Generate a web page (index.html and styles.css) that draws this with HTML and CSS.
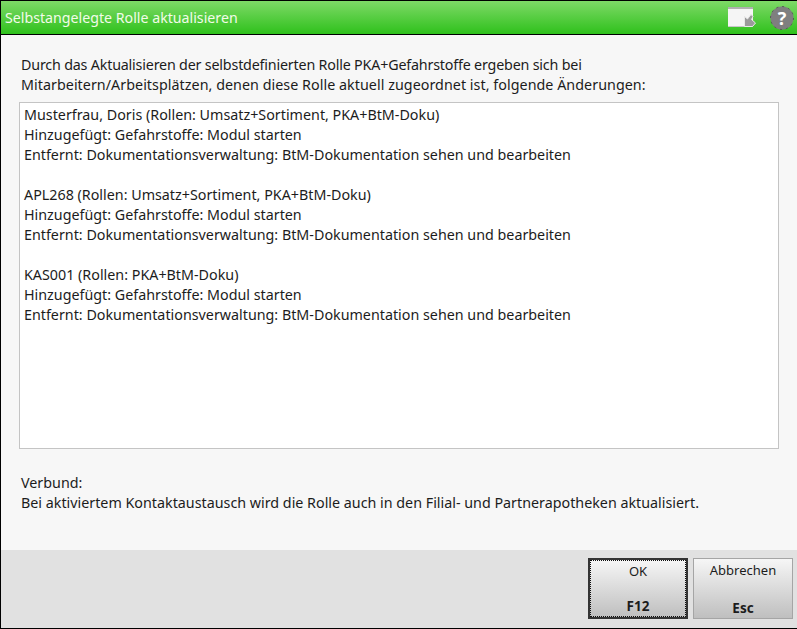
FILE: index.html
```html
<!DOCTYPE html>
<html lang="de">
<head>
<meta charset="utf-8">
<title>Selbstangelegte Rolle aktualisieren</title>
<link rel="stylesheet" href="styles.css">
</head>
<body>
<div class="window">
  <header class="titlebar">
    <span class="title">Selbstangelegte Rolle aktualisieren</span>
    <svg class="icon-note" width="28" height="21" viewBox="0 0 28 21">
      <rect x="0" y="0" width="25" height="20" fill="#f5f5f5"/>
      <rect x="0" y="0" width="25" height="2" fill="#b0b0b0"/>
      <rect x="0" y="19" width="25" height="1" fill="#c8c8c8"/>
      <path d="M16.500 9.500v10h8l3-3.500-4-3.500 1.500-3-2-2-3.500 4.500z" fill="#9b9b9b" stroke="#e8e8e8"/>
    </svg>
    <svg class="icon-help" width="24" height="24" viewBox="0 0 24 24">
      <circle cx="12" cy="12" r="11.500" fill="#7f7f7f"/>
      <circle cx="12" cy="12" r="11.500" fill="none" stroke="#555" stroke-dasharray="2 4"/>
      <text x="12" y="18.500" text-anchor="middle" class="help-mark">?</text>
    </svg>
  </header>
  <main class="content">
    <p class="intro"><span class="intro-first">Durch das Aktualisieren der selbstdefinierten Rolle PKA+Gefahrstoffe ergeben sich bei</span><br><span class="intro-second">Mitarbeitern/Arbeitsplätzen, denen diese Rolle aktuell zugeordnet ist, folgende Änderungen:</span></p>
    <div class="changes">
      <p>Musterfrau, Doris (Rollen: Umsatz+Sortiment, PKA+BtM-Doku)<br>Hinzugefügt: Gefahrstoffe: Modul starten<br>Entfernt: Dokumentationsverwaltung: BtM-Dokumentation sehen und bearbeiten</p>
      <p>APL268 (Rollen: Umsatz+Sortiment, PKA+BtM-Doku)<br>Hinzugefügt: Gefahrstoffe: Modul starten<br>Entfernt: Dokumentationsverwaltung: BtM-Dokumentation sehen und bearbeiten</p>
      <p>KAS001 (Rollen: PKA+BtM-Doku)<br>Hinzugefügt: Gefahrstoffe: Modul starten<br>Entfernt: Dokumentationsverwaltung: BtM-Dokumentation sehen und bearbeiten</p>
    </div>
    <p class="note">Verbund:<br>Bei aktiviertem Kontaktaustausch wird die Rolle auch in den Filial- und Partnerapotheken aktualisiert.</p>
  </main>
  <footer class="actions">
    <button class="btn btn-default"><span class="btn-inner"><span>OK</span><b>F12</b></span></button>
    <button class="btn"><span class="btn-inner"><span>Abbrechen</span><b>Esc</b></span></button>
  </footer>
</div>
</body>
</html>
```
FILE: styles.css
```css
* { box-sizing: border-box; }
html, body { margin: 0; height: 100%; }
body { background: #000; font-family: "Noto Sans", "Open Sans", "Liberation Sans", sans-serif; font-size: 14.3px; line-height: 20px; color: #1c1c1c; }
.window { width: 797px; height: 629px; padding: 1px 0 1px 1px; display: flex; flex-direction: column; background: #000; }
.titlebar { height: 33px; flex: none; display: flex; align-items: center; padding: 0 3px 0 4px; background: linear-gradient(#7ed967, #2fc11c); margin-bottom: 1px; }
.title { color: #f2fbe9; font-size: 14.2px; flex: 1; }
.icon-note { margin-right: 14px; }
.help-mark { font: bold 18px "Open Sans", sans-serif; fill: #fff; }
.content { flex: 1; background: #f7f7f7; padding: 20px 18px 0 18px; display: flex; flex-direction: column; min-height: 0; }
.intro, .note { margin: 0; padding-left: 2px; }
.intro { margin-bottom: 7px; }
.intro-first { letter-spacing: -0.19px; }
.intro-second { letter-spacing: 0.04px; }
.changes { height: 347px; flex: none; background: #fff; border: 1px solid #c4c4c4; padding: 2px 4px; }
.changes p { margin: 0 0 20px; }
.note { margin-top: 24px; }
.actions { height: 78px; flex: none; background: #e1e1e1; display: flex; justify-content: flex-end; gap: 5px; padding: 8px 4px 0 0; }
.btn { width: 100px; height: 61px; padding: 0; border: 1px solid #a5a5a5; background: linear-gradient(#f6f6f6, #bfbfbf); font: inherit; font-size: 13px; color: #1c1c1c; }
.btn-inner { display: flex; flex-direction: column; justify-content: space-between; align-items: center; height: 100%; padding: 1px 0 0; }
.btn-inner b { font-size: 13.5px; }
.btn-default { border: 2px solid #333; }
.btn-default .btn-inner { border: 1px dotted #111; padding: 0; }
```
